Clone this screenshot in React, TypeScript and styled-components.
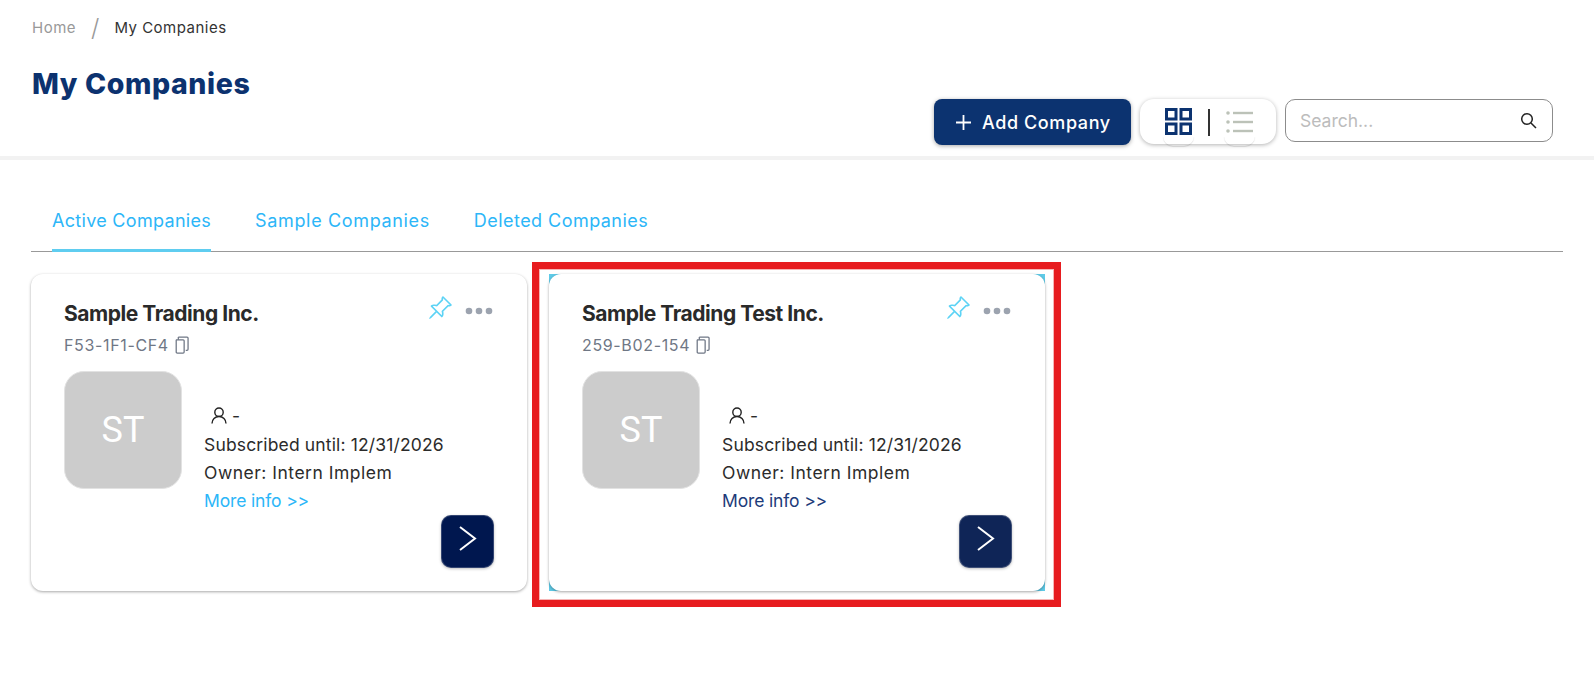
import React from "react";
import styled, { createGlobalStyle } from "styled-components";
import { BsPinAngle } from "react-icons/bs";

const Global = createGlobalStyle`
  html, body { margin: 0; padding: 0; background: #fff; }
  body { font-family: Inter, "Noto Sans", sans-serif; color: #2b2b2b; }
  * { box-sizing: border-box; }
`;

const Page = styled.div`
  width: 1594px;
  min-height: 673px;
  background: #fff;
`;

const Header = styled.header`
  height: 160px;
  padding: 0 41px 0 32px;
  border-bottom: 4px solid #f2f2f2;
  display: flex;
  justify-content: space-between;
`;

const TitleBlock = styled.div`
  display: flex;
  flex-direction: column;
`;

const Breadcrumb = styled.nav`
  margin-top: 14px;
  height: 26px;
  display: flex;
  align-items: center;
  font-size: 15px;
`;

const Crumb = styled.span<{ $current?: boolean }>`
  color: ${(p) => (p.$current ? "#333" : "#999")};
  letter-spacing: 0.5px;
`;

const Slash = styled.span`
  color: #999;
  font-size: 24px;
  font-weight: 300;
  margin: 0 15px 0 15px;
`;

const Title = styled.h1`
  margin: 27px 0 0;
  font-size: 28.5px;
  line-height: 34px;
  font-weight: 800;
  color: #0c326f;
  letter-spacing: 0.6px;
`;

const Actions = styled.div`
  display: flex;
  align-items: flex-start;
  gap: 9px;
  margin-top: 99px;
`;

const AddButton = styled.button`
  width: 197px;
  height: 46px;
  border: 0;
  border-radius: 8px;
  background: #0c3370;
  color: #fff;
  font: 500 18px Inter, sans-serif;
  letter-spacing: 0.6px;
  display: flex;
  align-items: center;
  gap: 11px;
  padding: 0 0 0 22px;
  box-shadow: 0 1px 4px rgba(0, 0, 0, 0.35);
`;

const ViewToggle = styled.div`
  width: 136px;
  height: 45px;
  border-radius: 14px;
  background: #fff;
  box-shadow: 0 1px 4px rgba(0, 0, 0, 0.3);
  display: flex;
  align-items: center;
  padding: 0 0 0 25px;
`;

const ToggleItem = styled.span`
  position: relative;
  width: 27px;
  height: 27px;
  display: flex;
  align-items: center;
  justify-content: center;
  &::after {
    content: "";
    position: absolute;
    left: -2px;
    right: -2px;
    bottom: -11px;
    height: 10px;
    border-radius: 0 0 14px 14px;
    box-shadow: 0 1px 1px rgba(0, 0, 0, 0.12);
  }
`;

const ToggleDivider = styled.span`
  width: 2px;
  height: 27px;
  background: #333;
  margin: 2px 16px 0 16px;
`;

const SearchBox = styled.div`
  width: 268px;
  height: 43px;
  border: 1px solid #8c8c8c;
  border-radius: 10px;
  background: #fff;
  display: flex;
  align-items: center;
  padding: 0 15px 1px 14px;
`;

const SearchInput = styled.input`
  flex: 1;
  min-width: 0;
  border: 0;
  outline: 0;
  padding: 0;
  background: transparent;
  font: 400 17.5px Inter, sans-serif;
  color: #333;
  &::placeholder {
    color: #bcbcbc;
    opacity: 1;
  }
`;

const Tabs = styled.div`
  margin: 39px 31px 0;
  height: 53px;
  display: flex;
  border-bottom: 1px solid #999;
  padding-left: 21px;
  gap: 44px;
`;

const Tab = styled.div<{ $active?: boolean; $spacing: number }>`
  height: 53px;
  padding-top: 11px;
  font-size: 18px;
  line-height: 22px;
  color: #2cb6f8;
  letter-spacing: ${(p) => p.$spacing}px;
  border-bottom: 3px solid ${(p) => (p.$active ? "#5fcdf0" : "transparent")};
`;

const CardGrid = styled.section`
  margin-top: 22px;
  padding-left: 31px;
  display: flex;
  gap: 22px;
`;

const CardShell = styled.article<{ $selected?: boolean }>`
  position: relative;
  width: 496px;
  height: 317px;
  border-radius: ${(p) => (p.$selected ? "0" : "12px")};
  background: ${(p) => (p.$selected ? "#5fcbe8" : "transparent")};
`;

const CardFace = styled.div`
  height: 100%;
  padding: 24px 33px 23px;
  border-radius: 12px;
  background: #fff;
  box-shadow: 0 1px 3px rgba(0, 0, 0, 0.35);
  display: flex;
  flex-direction: column;
`;

const Highlight = styled.div`
  position: absolute;
  inset: -12px -16px -16px -17px;
  border: 7.5px solid #e71c1f;
  pointer-events: none;
  box-shadow: inset 0 0 0 1px #f6b5b5;
`;

const CardTop = styled.div`
  display: flex;
  justify-content: space-between;
  align-items: flex-start;
`;

const CardName = styled.h2`
  margin: 0;
  font-size: 21px;
  line-height: 32px;
  font-weight: 700;
  color: #2a2a2a;
  letter-spacing: -0.45px;
`;

const CardTools = styled.div`
  display: flex;
  align-items: center;
  gap: 12px;
  margin: -3px 1px 0 0;
  color: #5dd3f5;
`;

const CodeRow = styled.div`
  display: flex;
  align-items: center;
  gap: 5px;
  height: 26px;
  margin-top: 2px;
  font-size: 16px;
  color: #6f7785;
  letter-spacing: 0.65px;
`;

const CardBody = styled.div`
  display: flex;
  margin-top: 14px;
  gap: 22px;
`;

const Avatar = styled.div`
  width: 118px;
  height: 118px;
  flex: none;
  border-radius: 20px;
  background: #cccccc;
  border: 1px solid #e2e2e2;
  color: #fff;
  font: 400 36px Roboto, sans-serif;
  display: flex;
  align-items: center;
  justify-content: center;
`;

const Info = styled.div`
  padding-top: 29px;
  font-size: 17.5px;
  line-height: 28px;
  color: #2b2b2b;
`;

const PersonRow = styled.div`
  display: flex;
  align-items: center;
  gap: 5px;
  height: 31px;
  padding-left: 7px;
`;

const InfoLine = styled.div<{ $spacing: number }>`
  letter-spacing: ${(p) => p.$spacing}px;
`;

const MoreInfo = styled.a<{ $navy?: boolean }>`
  display: block;
  letter-spacing: -0.15px;
  color: ${(p) => (p.$navy ? "#1d3b7a" : "#2cb6f8")};
`;

const CardFooter = styled.div`
  margin-top: 0;
  display: flex;
  justify-content: flex-end;
`;

const GoButton = styled.button<{ $navy?: boolean }>`
  width: 53px;
  height: 53px;
  border: 1px solid rgba(255, 255, 255, 0.2);
  border-radius: 10px;
  padding: 0 0 6px 0;
  background: ${(p) => (p.$navy ? "#0f2557" : "#00174f")};
  box-shadow: 0 1px 3px rgba(0, 0, 0, 0.25);
  display: flex;
  align-items: center;
  justify-content: center;
`;

const Plus = () => (
  <svg width="15" height="15" viewBox="0 0 15 15" fill="none" stroke="#fff" strokeWidth="1.8">
    <path d="M7.5 0v15M0 7.5h15" />
  </svg>
);

const GridIcon = () => (
  <svg width="27" height="27" viewBox="0 0 27 27" fill="none" stroke="#0c3370" strokeWidth="3">
    <rect x="1.5" y="1.5" width="9.5" height="9.5" />
    <rect x="16" y="1.5" width="9.5" height="9.5" />
    <rect x="1.5" y="16" width="9.5" height="9.5" />
    <rect x="16" y="16" width="9.5" height="9.5" />
  </svg>
);

const ListIcon = () => (
  <svg width="27" height="22" viewBox="0 0 27 22" fill="#bcc2b8">
    <circle cx="2" cy="2" r="1.8" />
    <circle cx="2" cy="11" r="1.8" />
    <circle cx="2" cy="20" r="1.8" />
    <rect x="7" y="0.8" width="20" height="2.4" />
    <rect x="7" y="9.8" width="20" height="2.4" />
    <rect x="7" y="18.8" width="20" height="2.4" />
  </svg>
);

const SearchIcon = () => (
  <svg width="17" height="17" viewBox="0 0 17 17" fill="none" stroke="#222" strokeWidth="1.5">
    <circle cx="7" cy="7" r="5.3" />
    <path d="M11 11l5 5" />
  </svg>
);

const Dots = () => (
  <svg width="28" height="14" viewBox="0 0 28 14" fill="#9ca3af">
    <circle cx="4" cy="10" r="3.3" />
    <circle cx="14" cy="10" r="3.3" />
    <circle cx="24" cy="10" r="3.3" />
  </svg>
);

const CopyIcon = () => (
  <svg width="15" height="18" viewBox="0 0 14 17" fill="none" stroke="#6f7785" strokeWidth="1.2">
    <path d="M4 1h8.2a1 1 0 0 1 1 1v10.5a1 1 0 0 1-1 1H11" />
    <path d="M4 1v2.5" />
    <path d="M1.8 3.6H8.5a1 1 0 0 1 1 1v10.6a1 1 0 0 1-1 1H3a1 1 0 0 1-1-1V3.6" />
  </svg>
);

const PersonIcon = () => (
  <svg width="16" height="17" viewBox="0 0 16 17" fill="none" stroke="#222" strokeWidth="1.4">
    <circle cx="8" cy="5.2" r="4.2" />
    <path d="M1 16.5c0-4 3-7 7-7s7 3 7 7" />
  </svg>
);

const Chevron = () => (
  <svg width="19" height="25" viewBox="0 0 19 25" fill="none" stroke="#fff" strokeWidth="2">
    <path d="M2 1l15 11.5L2 24" />
  </svg>
);

type Company = { name: string; code: string; selected?: boolean };

const companies: Company[] = [
  { name: "Sample Trading Inc.", code: "F53-1F1-CF4" },
  { name: "Sample Trading Test Inc.", code: "259-B02-154", selected: true },
];

const CompanyCard = ({ name, code, selected }: Company) => (
  <CardShell $selected={selected}>
    <CardFace>
      <CardTop>
        <CardName>{name}</CardName>
        <CardTools>
          <BsPinAngle size={26} />
          <Dots />
        </CardTools>
      </CardTop>
      <CodeRow>
        {code}
        <CopyIcon />
      </CodeRow>
      <CardBody>
        <Avatar>ST</Avatar>
        <Info>
          <PersonRow>
            <PersonIcon />-
          </PersonRow>
          <InfoLine $spacing={0.15}>Subscribed until: 12/31/2026</InfoLine>
          <InfoLine $spacing={0.5}>Owner: Intern Implem</InfoLine>
          <MoreInfo $navy={selected}>More info &gt;&gt;</MoreInfo>
        </Info>
      </CardBody>
      <CardFooter>
        <GoButton $navy={selected} aria-label="Open">
          <Chevron />
        </GoButton>
      </CardFooter>
    </CardFace>
    {selected && <Highlight />}
  </CardShell>
);

export default function App() {
  return (
    <Page>
      <Global />
      <Header>
        <TitleBlock>
          <Breadcrumb>
            <Crumb>Home</Crumb>
            <Slash>/</Slash>
            <Crumb $current>My Companies</Crumb>
          </Breadcrumb>
          <Title>My Companies</Title>
        </TitleBlock>
        <Actions>
          <AddButton>
            <Plus />
            Add Company
          </AddButton>
          <ViewToggle>
            <ToggleItem>
              <GridIcon />
            </ToggleItem>
            <ToggleDivider />
            <ToggleItem>
              <ListIcon />
            </ToggleItem>
          </ViewToggle>
          <SearchBox>
            <SearchInput placeholder="Search..." />
            <SearchIcon />
          </SearchBox>
        </Actions>
      </Header>
      <Tabs>
        <Tab $active $spacing={0.3}>Active Companies</Tab>
        <Tab $spacing={0.65}>Sample Companies</Tab>
        <Tab $spacing={0.45}>Deleted Companies</Tab>
      </Tabs>
      <CardGrid>
        {companies.map((c) => (
          <CompanyCard key={c.code} {...c} />
        ))}
      </CardGrid>
    </Page>
  );
}
